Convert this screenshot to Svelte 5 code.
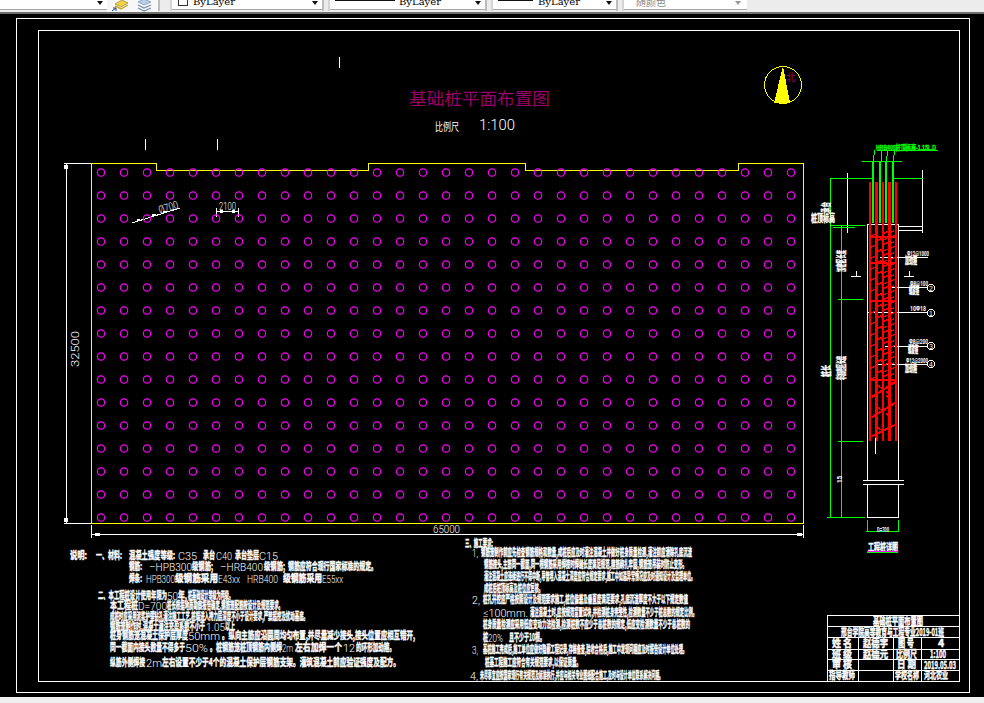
<script>
  // pile grid: 31 columns x 16 rows, 23px pitch
  const piles = [];
  for (let r = 0; r < 16; r++) {
    for (let c = 0; c < 31; c++) piles.push({ x: 101 + c * 23, y: 172.5 + r * 23 });
  }

  // [x, baseline, width, text] notes, split where the latin runs change weight
  const cn = [
    [70, 559, 17, '说明:'], [96, 559, 26, '一、材料:'], [129, 559, 46, '混凝土强度等级:'], [203, 559, 12, '承台'], [235, 559, 24, '承台垫层'],
    [129, 570, 13, '钢筋:'], [192, 570, 21, '级钢筋;'], [264, 570, 21, '级钢筋;'], [288, 570, 89, '钢筋应符合现行国家标准的规定。'],
    [129, 582, 13, '焊条:'], [175, 582, 43, '级钢筋采用'], [283, 582, 39, '级钢筋采用'],
    [98, 599, 69, '二、本工程桩设计使用年限为'], [178, 599, 9, '年,'], [188, 599, 45, '桩基础设计等级为丙级。'],
    [110, 609, 28, '本工程桩'], [167, 609, 116, '桩长根据地质勘察报告确定,钢筋笼配筋按设计及规范要求。'],
    [110, 620, 198, '成桩时应采用泥浆护壁钻孔灌注施工工艺,桩端进入持力层深度不小于设计要求,严禁超挖及扰动基底。'],
    [110, 630, 95, '钢筋笼制作时,混凝土灌注充盈系数不小于'], [225, 630, 10, '以上'],
    [110, 639, 78, '桩身钢筋笼混凝土保护层厚度'], [222, 639, 193, '。纵向主筋应沿圆周均匀布置,并尽量减少接头,接头位置应相互错开,'],
    [110, 651, 75, '同一截面内接头数量不得多于'], [210, 651, 72, '。桩钢筋笼桩顶钢筋内侧焊'], [295, 651, 47, '左右加焊一个'], [356, 651, 39, '的环形加劲箍。'],
    [110, 666, 35, '纵筋外侧焊接'], [162, 666, 238, '左右设置不少于4个的混凝土保护层钢筋支架。灌筑混凝土前应验证强度及配方。'],
    [465, 547, 28, '三、施工要求:'],
    [481, 556, 211, '钢筋笼制作前应先检查钢筋规格和数量,成桩后应及时灌注混凝土并做好桩身质量检测,灌注前应清除孔底沉渣'],
    [484, 568, 203, '钢筋接头,主筋同一截面,同一根钢筋采用焊接时焊缝长度满足规范,箍筋绑扎牢固,钢筋笼吊装时防止变形。'],
    [484, 580, 211, '灌注混凝土应连续进行不得中断,导管埋入混凝土深度应符合规定要求,施工中如遇异常情况应及时通知设计及监理单位。'],
    [484, 592, 59, '成桩后桩顶标高及桩位应复核。'],
    [483, 603, 205, '桩孔开挖应严格按照设计及规范要求施工,桩位偏差及垂直度满足要求,孔底沉渣厚度不大于以下规定数值'],
    [530, 616, 167, '灌注混凝土时,应按规范留置试块,并检测桩身完整性,检测数量不少于桩总数的规定比例。'],
    [483, 628, 207, '桩身质量检测应采用低应变动力法检测,检测桩数不应少于总桩数的规定,低应变检测数量不少于总桩数的'],
    [483, 641, 5, '桩'], [509, 641, 36, '且不少于10根。'],
    [483, 653, 204, '基桩施工完成后,施工单位应做好隐蔽工程记录,存档备查,验收合格后,施工中发现问题应及时报告设计单位处理。'],
    [485, 666, 96, '桩基工程施工应符合有关规范要求,以保证质量。'],
    [480, 679, 183, '未尽事宜应按国家现行有关规范及标准执行,并应与相关专业图纸配合施工,及时与设计单位联系解决问题。']
  ];

  const thin = [
    [178, 560, 19, 'C35'], [216, 560, 16, 'C40'], [259, 560, 19, 'C15'],
    [149, 571, 43, '–HPB300'], [220, 571, 43, '–HRB400'],
    [146, 583, 29, 'HPB300'], [218, 583, 22, 'E43xx'], [247, 583, 31, 'HRB400'], [322, 583, 21, 'E55xx'],
    [167, 600, 11, '50'], [138, 610, 29, 'D=700'], [206, 631, 19, '1.05'],
    [188, 640, 32, '50mm'], [185, 652, 23, '50%'], [282, 652, 11, '2m'], [343, 652, 12, '12'], [146, 667, 16, '2m'],
    [472, 557, 6, '1,'], [472, 604, 8, '2,'], [483, 617, 45, '≤100mm.'], [488, 642, 15, '20%'], [472, 654, 6, '3,'], [470, 680, 8, '4,']
  ];

  const titleRows = [
    [832, 647, 20, '姓 名'], [863, 647, 25, '赵德宇'], [898, 647, 16, '图 号'],
    [832, 658, 20, '班 级'], [863, 658, 25, '赵德元'], [896, 658, 21, '比例尺'],
    [832, 668, 20, '审 核'], [897, 668, 19, '日 期'],
    [829, 679, 26, '指导教师'], [895, 679, 24, '学校名称'], [924, 679, 24, '河北农业']
  ];

  // hoop steps inside the reinforcement cage: dense up top, open spiral below
  const hoops = [];
  for (let y = 232; y < 378; y += 5.5) {
    const odd = Math.round((y - 232) / 5.5) % 2 === 1;
    hoops.push(odd
      ? `M877 ${y + 3}l5-2v2l5-2M890 ${y}l5-2`
      : `M871 ${y + 4}l5-2M884 ${y + 1}l5-2v2l5-2`);
  }
  const spiral = [[397, 382], [417, 403], [436, 425]];
  const stubs = [[386, 392], [408, 396], [428, 414]];

  const balloons = [[288, '2'], [313, '1'], [346, '3'], [364, '4']];
</script>

<div class="page">
  <div class="toolbar">
    <div class="combo first"><i class="arrow"></i></div>
    <div class="tools">
      <svg width="44" height="13" viewBox="0 0 44 13">
        <path d="M5 5l7-4 6 3-7 4z" fill="#f5d33c" stroke="#8a7420" stroke-width=".6" />
        <path d="M5 7l6 3 7-4" fill="none" stroke="#c9a520" stroke-width="1.4" />
        <path d="M2 12l4-3M3 9h3v3" fill="none" stroke="#1c3f94" stroke-width="1" />
        <path d="M28 3l6-3 7 3-7 3z" fill="#b9cfe6" stroke="#5f7f9f" stroke-width=".6" />
        <path d="M28 6l6 3 7-3M28 9l6 3 7-3" fill="none" stroke="#6f8faf" stroke-width="1.2" />
      </svg>
    </div>
    <i class="grip g1"></i>
    <div class="combo c1"><b class="swatch"></b><span>ByLayer</span><i class="arrow"></i></div>
    <i class="grip"></i>
    <div class="combo c2"><b class="rule"></b><span>ByLayer</span><i class="arrow"></i></div>
    <i class="grip"></i>
    <div class="combo c3"><b class="rule short"></b><span>ByLayer</span><i class="arrow"></i></div>
    <i class="grip"></i>
    <div class="combo c4"><span>随颜色</span><i class="arrow off"></i></div>
  </div>

  <svg class="canvas" width="984" height="683" viewBox="0 14 984 683">
    <g class="line white">
      <rect x="16.5" y="18.5" width="953" height="674" />
      <rect x="38.5" y="30.5" width="921" height="651" />
      <path d="M339.5 57v11M145.5 139v11M217.5 139v11" />
      <path d="M64 163.5h27.5M64 523.5h27.5M66.5 164v359M91.5 525v13M803.5 525v13M92 534.5h711" />
      <path d="M216.5 208v9M238.5 208v9M217 211.5h21M132 223l48-15" />
      <path d="M847.5 173v60M922.5 170v63M867.5 224v256M867.5 484v33.5h31V484M898.5 224v256M867 224.5h31M898 226.5h24M898 230.5h24M863 480.5h41M863 484.5h41" />
      <path d="M851 276.5h10M856.5 271v5M904 276.5h10M909.5 271v5" />
      <path d="M880 257.5h48M888 287.5h40M868 312.5h60M885 346.5h43M878 364.5h49" />
      <path d="M827 615.5h132M827 626.5h132M827 637.5h132M827 649.5h132M827 659.5h132M827 670.5h132M827.5 615v66M858.5 637v44M893.5 637v44M921.5 637v44" />
    </g>
    <g class="sq">
      <rect x="64" y="165" width="4" height="4" /><rect x="64" y="518" width="4" height="4" />
      <rect x="95" y="533" width="5" height="3" /><rect x="797" y="533" width="5" height="3" />
      <rect x="220" y="210" width="3" height="3" /><rect x="232" y="210" width="3" height="3" />
      <rect x="137" y="219" width="3" height="2" /><rect x="152" y="214" width="4" height="2" /><rect x="163" y="211" width="4" height="2" />
    </g>

    <path class="line yellow" d="M91.5 523.5V163.5H156.5V170.5H368.5V163.5H525.5V170.5H738.5V163.5H803.5V523.5Z" />

    <g class="piles">
      {#each piles as p}
        <circle cx={p.x} cy={p.y} r="3.7" />
      {/each}
    </g>

    <text class="title" x="409" y="105" textLength="141" lengthAdjust="spacingAndGlyphs">基础桩平面布置图</text>
    <text class="scale" x="435" y="131" textLength="24" lengthAdjust="spacingAndGlyphs">比例尺</text>
    <text class="latin big" x="479" y="130" textLength="36" lengthAdjust="spacingAndGlyphs">1:100</text>

    <circle class="line yellow" cx="783" cy="85" r="18.5" />
    <path class="fillY" d="M783 66L790 103H774Z" />
    <text class="north" x="786" y="81">北</text>

    <text class="latin" transform="translate(79 367) rotate(-90)" textLength="36" lengthAdjust="spacingAndGlyphs">32500</text>
    <text class="latin" x="433" y="533" textLength="27" lengthAdjust="spacingAndGlyphs">65000</text>
    <text class="latin" x="219" y="210" textLength="17" lengthAdjust="spacingAndGlyphs">2100</text>
    <text class="latin" transform="translate(160 214) rotate(-18)" textLength="20" lengthAdjust="spacingAndGlyphs">Ø700</text>

    {#each cn as [x, y, w, t]}
      <text class="cad" {x} {y} textLength={w} lengthAdjust="spacingAndGlyphs">{t}</text>
    {/each}
    {#each thin as [x, y, w, t]}
      <text class="latin" {x} {y} textLength={w} lengthAdjust="spacingAndGlyphs">{t}</text>
    {/each}

    <!-- pile section -->
    <g class="line green">
      <path d="M830.5 178v340M841.5 225v293M830 178.5h43M893 178.5h30M830 225.5h35M833 227.5h22M838 299.5h25M838 441.5h25M827 517.5h38M867.5 520v12M898.5 520v12M866 531.5h33M862 161.5h40M877 150.5h61" />
      <path d="M875 150l-2 11M882 150l-1 11M888 150l-2 13M895 150l-2 11" />
    </g>
    <path class="bars green2" d="M873 161v62M880 161v62M886 161v62M893 161v62" />
    <path class="bars red" d="M870 182v259M876.5 182v259M883 182v259M889.5 182v259M896 182v259" />
    <path class="hoop" d="M870 262.5h26M870 300.5h26M870 379.5h26M870 236.5h26" />
    {#each hoops as d}
      <path class="hoop thin" {d} />
    {/each}
    {#each spiral as [a, b]}
      <path class="hoop" d="M872 {a}L895 {b}" />
    {/each}
    {#each stubs as [a, b]}
      <path class="hoop thin" d="M878 {a}l5 3M886 {b}l5 3" />
    {/each}
    <path class="line white" d="M875 438v16" />

    <text class="green-text" x="876" y="150" textLength="60" lengthAdjust="spacingAndGlyphs">HRB400桩顶标高-1.15L.D</text>

    <text class="latin tiny" x="907" y="256" textLength="22" lengthAdjust="spacingAndGlyphs">Φ12@1000</text>
    <text class="latin tiny" x="910" y="286" textLength="18" lengthAdjust="spacingAndGlyphs">Φ8@100</text>
    <text class="latin tiny" x="910" y="311" textLength="16" lengthAdjust="spacingAndGlyphs">10Φ18</text>
    <text class="latin tiny" x="909" y="344" textLength="19" lengthAdjust="spacingAndGlyphs">Φ8@200</text>
    <text class="latin tiny" x="906" y="363" textLength="22" lengthAdjust="spacingAndGlyphs">Φ12@2000</text>
    <text class="cad" x="905" y="264" textLength="12" lengthAdjust="spacingAndGlyphs">加劲箍</text>
    <text class="cad" x="909" y="294" textLength="10" lengthAdjust="spacingAndGlyphs">螺旋箍</text>
    <text class="cad" x="908" y="353" textLength="10" lengthAdjust="spacingAndGlyphs">螺旋箍</text>
    <text class="cad" x="905" y="372" textLength="12" lengthAdjust="spacingAndGlyphs">加劲箍</text>
    {#each balloons as [y, n]}
      <circle class="line white" cx="931" cy={y} r="3.5" />
      <text class="num" x="931" y={y + 2.5}>{n}</text>
    {/each}

    <text class="cad" x="811" y="222" textLength="24" lengthAdjust="spacingAndGlyphs">桩顶标高</text>
    <text class="cad" transform="translate(830 213) rotate(-90)" textLength="11" lengthAdjust="spacingAndGlyphs">承台</text>
    <text class="cad" transform="translate(845 272) rotate(-90)" textLength="22" lengthAdjust="spacingAndGlyphs">加密区长度</text>
    <text class="cad" transform="translate(830 377) rotate(-90)" textLength="12" lengthAdjust="spacingAndGlyphs">桩长</text>
    <text class="cad" transform="translate(845 380) rotate(-90)" textLength="24" lengthAdjust="spacingAndGlyphs">非加密区长度</text>
    <text class="latin tiny" transform="translate(842 483) rotate(-90)" textLength="7" lengthAdjust="spacingAndGlyphs">15</text>
    <text class="latin tiny" x="877" y="532" textLength="12" lengthAdjust="spacingAndGlyphs">D=700</text>
    <text class="cad" x="868" y="551" textLength="30" lengthAdjust="spacingAndGlyphs">工程桩详图</text>
    <path class="line magenta" d="M867 551.5h31" />
    <path class="line green" d="M867 552.5h31" />

    <!-- title block -->
    <text class="cad" x="873" y="625" textLength="50" lengthAdjust="spacingAndGlyphs">基础桩平面布置图</text>
    <text class="cad" x="841" y="636" textLength="103" lengthAdjust="spacingAndGlyphs">邢台学院高等教育与工程专业2019-01班</text>
    {#each titleRows as [x, y, w, t]}
      <text class="cad" {x} {y} textLength={w} lengthAdjust="spacingAndGlyphs">{t}</text>
    {/each}
    <text class="cad" x="938" y="647">4</text>
    <text class="cad" x="930" y="658" textLength="16" lengthAdjust="spacingAndGlyphs">1:100</text>
    <text class="cad" x="924" y="669" textLength="32" lengthAdjust="spacingAndGlyphs">2019.05.03</text>
  </svg>

  <div class="statusbar"></div>
</div>

<style>
  :global(body) {
    margin: 0;
    background: #000;
    font-family: "Liberation Sans", "Noto Sans CJK SC", sans-serif;
  }

  .page {
    width: 984px;
    height: 703px;
    display: flex;
    flex-direction: column;
    overflow: hidden;
  }

  .toolbar {
    height: 12px;
    flex: none;
    display: flex;
    background: #ececec;
    border-bottom: 2px solid #6e6e6e;
    overflow: hidden;
  }
  .combo {
    height: 10px;
    display: flex;
    align-items: flex-end;
    background: #fff;
    border-bottom: 1px solid #a8a8a8;
    box-sizing: border-box;
    position: relative;
    overflow: hidden;
    font-family: "DejaVu Serif", serif;
    font-size: 10px;
    line-height: 10px;
    color: #000;
  }
  .combo span { position: absolute; top: -3px; }
  .first { width: 107px; }
  .c1 { width: 150px; }
  .c1 span { left: 21px; }
  .c2 { width: 155px; }
  .c2 span { left: 69px; }
  .c3 { width: 123px; }
  .c3 span { left: 45px; }
  .c4 { width: 123px; color: #888; font-family: "Noto Sans CJK SC", sans-serif; }
  .c4 span { left: 12px; }

  .arrow {
    position: absolute;
    right: 4px;
    top: 1px;
    border: 3px solid transparent;
    border-top: 4px solid #111;
    border-bottom: 0;
  }
  .arrow.off { border-top-color: #999; right: 6px; }

  .swatch {
    position: absolute;
    left: 6px;
    top: -4px;
    width: 8px;
    height: 8px;
    border: 1px solid #333;
  }
  .rule {
    position: absolute;
    left: 5px;
    top: 0;
    width: 60px;
    height: 1px;
    background: #111;
  }
  .rule.short { width: 35px; }

  .tools {
    width: 51px;
    height: 12px;
    padding-left: 3px;
    box-sizing: border-box;
    background: #f7f7f7;
  }
  .tools svg { display: block; margin-top: -1px; }

  .grip {
    width: 8px;
    flex: none;
    height: 11px;
    box-sizing: border-box;
    border-left: 2px solid #bcbcbc;
    border-right: 2px solid #d4d4d4;
  }
  .grip.g1 { width: 14px; }

  .canvas {
    display: block;
    flex: none;
    background: #000;
  }

  .statusbar {
    flex: 1;
    background: #f0f0f0;
  }

  .line {
    fill: none;
    stroke-width: 1;
    shape-rendering: crispEdges;
  }
  .white { stroke: #fff; }
  .yellow { stroke: #ff0; }
  .green { stroke: #0f0; }
  .magenta { stroke: #f0f; }

  .sq { fill: #fff; }
  .fillY { fill: #ff0; shape-rendering: crispEdges; }

  .piles circle {
    fill: none;
    stroke: #f0f;
    stroke-width: 1.15;
  }

  .title {
    fill: #99006b;
    font-family: "Noto Sans CJK SC", sans-serif;
    font-size: 17px;
  }
  .north {
    fill: #99006b;
    font-family: "Noto Sans CJK SC", sans-serif;
    font-size: 10px;
  }

  .scale {
    fill: #fff;
    font-family: "Noto Sans CJK SC", sans-serif;
    font-size: 11px;
  }
  .cad {
    fill: #fff;
    stroke: #fff;
    stroke-width: 0.45;
    font-family: "Noto Sans CJK SC", sans-serif;
    font-size: 10.5px;
    font-weight: 700;
  }
  .latin {
    fill: #fff;
    font-family: Roboto, "Liberation Sans", sans-serif;
    font-size: 11px;
    font-weight: 300;
  }
  .latin.big { font-size: 15px; }
  .latin.tiny {
    font-size: 7px;
    font-weight: 700;
  }
  .num {
    fill: #fff;
    font-size: 7px;
    text-anchor: middle;
  }
  .green-text {
    fill: #0f0;
    stroke: #0f0;
    stroke-width: 0.35;
    font-family: "Liberation Sans", "Noto Sans CJK SC", sans-serif;
    font-size: 7px;
    font-weight: 700;
  }

  .bars {
    fill: none;
    shape-rendering: crispEdges;
  }
  .green2 { stroke: #0f0; stroke-width: 2; }
  .red { stroke: #f00; stroke-width: 2.5; }
  .hoop {
    fill: none;
    stroke: #f00;
    stroke-width: 2;
    shape-rendering: crispEdges;
  }
  .hoop.thin { stroke-width: 1.5; }
</style>
